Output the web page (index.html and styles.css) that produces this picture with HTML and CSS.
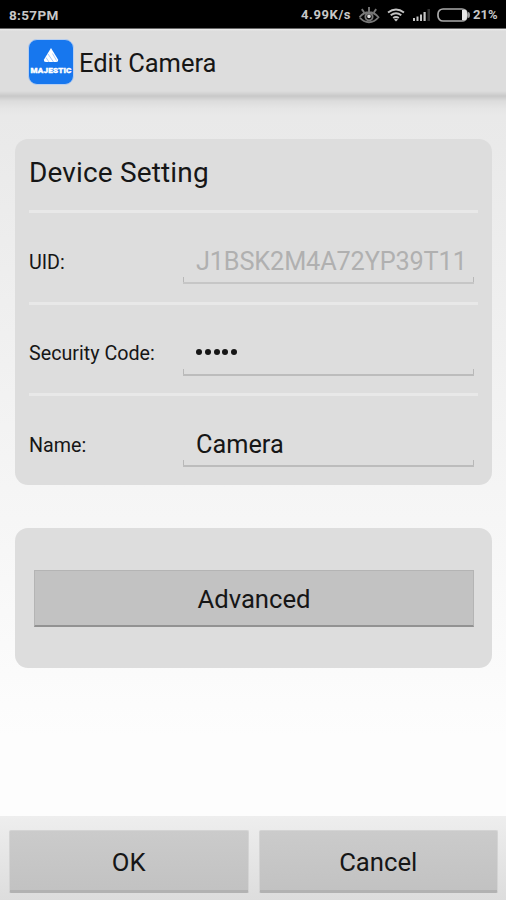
FILE: index.html
```html
<!DOCTYPE html>
<html lang="en">
<head>
<meta charset="utf-8">
<title>Edit Camera</title>
<link rel="stylesheet" href="styles.css">
</head>
<body>
<div class="statusbar">
  <span class="clock">8:57PM</span>
  <span class="speed">4.99K/s</span>
  <svg class="eye" width="22" height="18" viewBox="0 0 24 20" fill="none" stroke="#777" stroke-width="2.100">
    <path d="M1.500 12.500Q6 7 12 7t10.500 5.500Q18 18 12 18T1.500 12.500M12 6V1M6.500 7 4 3.500M17.500 7 20 3.500"/>
    <circle cx="12" cy="12" r="4"/><circle cx="12" cy="11.500" r="1" fill="#ddd" stroke="#ddd"/>
  </svg>
  <svg class="wifi" width="18" height="14" viewBox="0 0 18 14" fill="none" stroke="#c4c4c4" stroke-width="1.900">
    <path d="M1 4.500Q9-1.500 17 4.500M3.700 7.300Q9 3.200 14.300 7.300M6.200 10Q9 7.800 11.800 10"/><path d="m7 11.500 2 2 2-2q-2-1.500-4 0" fill="#c4c4c4" stroke="none"/>
  </svg>
  <svg class="signal" width="18" height="13" viewBox="0 0 18 13" fill="#c4c4c4">
    <path d="M0 10h2v3H0zM3.500 8.500h2V13h-2zM7 6.500h2V13H7zM10.500 4h2.200v9h-2.200z"/><path d="M14.500 1H17v12h-2.500z" fill="#333"/>
  </svg>
  <svg class="battery" width="34" height="14" viewBox="0 0 34 14">
    <rect x="1" y="1" width="29" height="12" rx="5" fill="none" stroke="#aaa" stroke-width="1.700"/>
    <path d="M25 2h3.500Q30 2 30 7t-1.500 5H25z" fill="#e5e5e5"/><path d="M31 4q2 0 2 3t-2 3z" fill="#999"/>
  </svg>
  <span class="percent">21%</span>
</div>
<header class="header">
  <div class="logo">
    <svg width="16" height="15" viewBox="0 0 16 15"><path d="M8 0 15 11.500Q15.500 14 13 14H3Q.5 14 1 11.500z" fill="#fff"/><path d="m5 6 5.500 8M3 9.500 6 14M9.500 5.500l4 7" stroke="#8dbcff" stroke-width=".8"/></svg>
    <span class="brand">MAJESTIC</span>
  </div>
  <h1 class="title">Edit Camera</h1>
</header>
<main class="content">
  <section class="card settings">
    <h2 class="heading">Device Setting</h2>
    <div class="row"><span class="label uid-label">UID:</span><div class="field disabled"><span class="value uid">J1BSK2M4A72YP39T11</span></div></div>
    <div class="row"><span class="label code-label">Security Code:</span><div class="field"><span class="value dots"><i></i><i></i><i></i><i></i><i></i></span></div></div>
    <div class="row"><span class="label">Name:</span><div class="field"><span class="value camera">Camera</span></div></div>
  </section>
  <section class="card actions"><button class="advanced">Advanced</button></section>
</main>
<footer class="footer"><button class="ok">OK</button><button class="cancel">Cancel</button></footer>
</body>
</html>
```
FILE: styles.css
```css
* { box-sizing: border-box; }
body {
  margin: 0;
  width: 506px;
  height: 900px;
  display: flex;
  flex-direction: column;
  overflow: hidden;
  font-family: Roboto, sans-serif;
  color: #161616;
  background: #fdfdfd;
}
h1, h2 { margin: 0; font-weight: 400; }
.statusbar {
  height: 29px;
  flex: none;
  display: flex;
  align-items: center;
  padding: 1px 8px 0 9px;
  background: #000;
  border-bottom: 1px solid #686868;
  color: #c8c8c8;
  font-size: 13px;
  font-weight: 700;
  white-space: nowrap;
}
.clock { width: 292px; font-size: 13.500px; letter-spacing: .35px; }
.speed { width: 57px; letter-spacing: .6px; }
.eye { margin-right: 7px; }
.wifi { margin-right: 8px; }
.signal { margin-right: 6px; }
.battery { margin-right: 2px; }
.statusbar svg { flex: none; }
.header {
  height: 67px;
  flex: none;
  display: flex;
  align-items: center;
  padding: 0 28px 1px;
  background: linear-gradient(#eee 0, #ddd 2px, #ddd 62px, #cdcdcd 66px, #c8c8c8);
}
.logo {
  width: 46px;
  height: 46px;
  display: flex;
  flex-direction: column;
  align-items: center;
  padding-top: 8px;
  border-radius: 9px;
  border: 1px solid #b8cff0;
  background: #1777ee;
  color: #fff;
}
.brand { padding-top: 2px; font: 900 8px/11px Roboto, sans-serif; letter-spacing: .25px; -webkit-text-stroke: .4px #fff; }
.title { margin-left: 5px; padding-top: 2px; font-size: 25.500px; line-height: 32px; letter-spacing: -.05px; }
.content {
  flex: 1;
  padding: 43px 14px 0 15px;
  background: linear-gradient(#c8c8c8 0, #dcdcdc 5px, #e5e5e5 12px, #e9e9e9 20px, #f3f3f3 330px, #fdfdfd 640px);
}
.card { background: #ddd; border-radius: 13px; }
.settings { height: 346px; padding: 0 14px; }
.heading { height: 71px; padding: 17px 0 0; font-size: 28px; line-height: 34px; letter-spacing: .15px; }
.row {
  height: 91.500px;
  display: flex;
  border-top: 3px solid #e8e8e8;
}
.label { width: 154px; padding-top: 38px; font-size: 19.700px; line-height: 24px; white-space: nowrap; }
.code-label { padding-top: 37px; }
.field {
  width: 291px;
  height: 71px;
  display: flex;
  align-items: flex-end;
  padding: 0 11px 5px 12px;
  background:
    linear-gradient(#b8b8b8, #b8b8b8) 0 100% / 1px 5px no-repeat,
    linear-gradient(#b8b8b8, #b8b8b8) 100% 100% / 1px 5px no-repeat;
  border-bottom: 2px solid #bcbcbc;
}
.disabled { border-bottom-color: #c6c6c6; }
.value { display: block; overflow: hidden; font-size: 25.300px; line-height: 30px; white-space: nowrap; }
.uid { width: 268px; padding-left: 1px; color: #b0b0b0; letter-spacing: -.15px; }
.camera { padding-left: 1px; }
.dots { display: flex; gap: 2.800px; padding: 0 0 14px 1px; }
.dots i { width: 6px; height: 6px; border-radius: 50%; background: #161616; }
.actions { height: 140px; margin-top: 43px; padding: 42px 19px; }
button { font: 25.700px/30px Roboto, sans-serif; color: #161616; border: 0; padding: 2px 0 0; }
.advanced {
  display: block;
  width: 440px;
  height: 57px;
  border: solid #b4b4b4;
  border-width: 1px 1px 2px;
  border-bottom-color: #929292;
  background: #c2c2c2;
}
.footer {
  height: 84px;
  flex: none;
  display: grid;
  grid-template-columns: 1fr 1fr;
  gap: 10px;
  padding: 14px 8px 7px 9px;
  background: linear-gradient(#eee, #ddd);
}
.footer button {
  border: solid #d4d4d4;
  border-width: 1px 1px 3px;
  border-bottom-color: #b2b2b2;
  border-radius: 2px;
  background: linear-gradient(#cbcbcb, #c2c2c2);
}
```
